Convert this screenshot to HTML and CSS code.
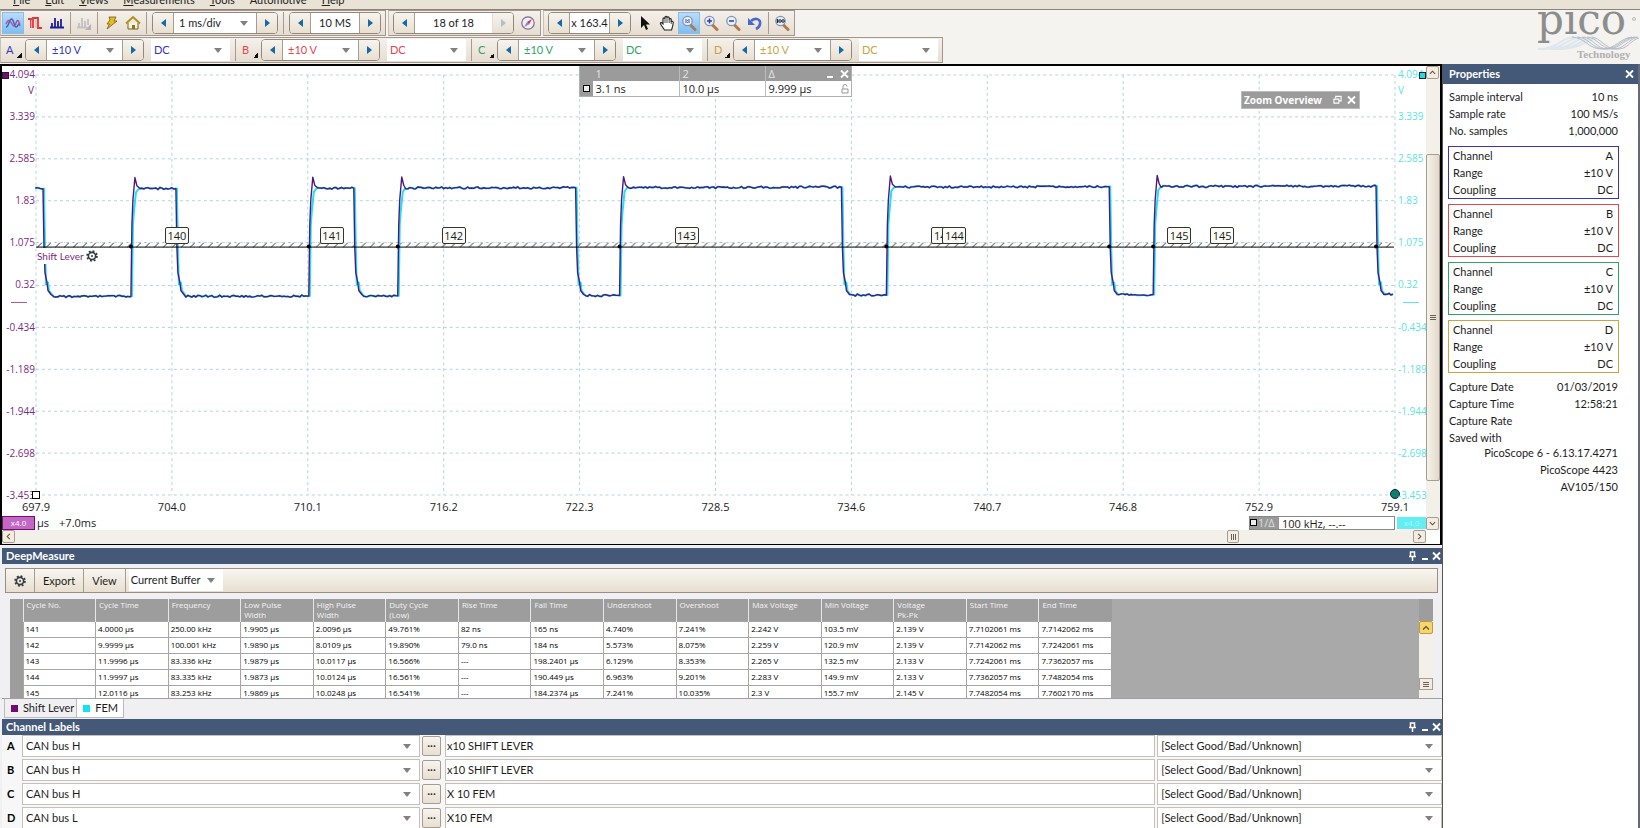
FILE: index.html
```
<!DOCTYPE html>
<html lang="en">
<head>
    <meta charset="UTF-8">
    <title>PicoScope 6 Automotive</title>
    <link rel="stylesheet" href="styles.css">
</head>
<body>

    <!-- shared icons -->
    <svg class="defs" aria-hidden="true">
        <symbol id="gear" viewBox="0 0 12 12">
            <circle cx="6" cy="6" r="3.6" fill="none" stroke="#333a44" stroke-width="1.6"/>
            <circle cx="6" cy="6" r="4.9" fill="none" stroke="#333a44" stroke-width="1.8" stroke-dasharray="1.9 1.95"/>
            <circle cx="6" cy="6" r="1" fill="#333a44"/>
        </symbol>
        <symbol id="lens" viewBox="0 0 16 16">
            <path d="M9 9.500L14 14.500" stroke="#b0794c" stroke-width="3" stroke-linecap="round"/>
            <circle cx="6.500" cy="6" r="4.700" fill="#e9f0fb" stroke="#7f95b8" stroke-width="1.300"/>
        </symbol>
        <symbol id="pin" viewBox="0 0 9 10">
            <path d="M2.500 5V1h4v4M1 5.500h7M4.500 6v4" fill="none" stroke="#fff" stroke-width="1.500"/>
        </symbol>
        <symbol id="min" viewBox="0 0 9 10">
            <path d="M2 8h6" stroke="#fff" stroke-width="2"/>
        </symbol>
        <symbol id="close" viewBox="0 0 9 10">
            <path d="M1 1.500l7 7M8 1.500l-7 7" stroke="#fff" stroke-width="1.800"/>
        </symbol>
    </svg>

    <nav class="menu">
        <a href="#"><u>F</u>ile</a>
        <a href="#"><u>E</u>dit</a>
        <a href="#"><u>V</u>iews</a>
        <a href="#"><u>M</u>easurements</a>
        <a href="#"><u>T</u>ools</a>
        <a href="#">Automotive</a>
        <a href="#"><u>H</u>elp</a>
    </nav>

    <header class="top">
        <div class="bars">
            <div class="row">
                <div class="bar">
                    <button class="icon active" aria-label="Scope mode"><svg viewBox="0 0 16 16"><path d="M1 12C4 12 4 4 6.500 4S9 12 11 12s2-3 4-4" fill="none" stroke="#3c62c4" stroke-width="1.500"/><path d="M1 9C3 4 5 5 6.500 8s3 5 4.500 0 3-2 4 3" fill="none" stroke="#a5568f" stroke-width="1.400"/></svg></button>
                    <button class="icon" aria-label="Persistence mode"><svg viewBox="0 0 16 16"><path d="M1 4h3v9M6 13V3h5v10h4" fill="none" stroke="#e2353b" stroke-width="1.800"/><path d="M4.500 5v8M9 5v8" stroke="#e8a0a0"/></svg></button>
                    <button class="icon" aria-label="Spectrum mode"><svg viewBox="0 0 16 16"><path d="M1 12.500h14M3 12V8M6 12V3M9 12V6M12 12V4" stroke="#1d1d96" stroke-width="1.800" fill="none"/></svg></button>
                    <span class="sep"></span>
                    <button class="icon" aria-label="Trigger view" disabled><svg viewBox="0 0 16 16"><path d="M1 12.500h10M3 12V8M6 12V3M9 12V6M12 10V4" stroke="#c3bfc6" stroke-width="1.800" fill="none"/><path d="M15 9v6H9z" fill="#b5b1b6"/></svg></button>
                    <span class="sep"></span>
                    <button class="icon" aria-label="Auto setup"><svg viewBox="0 0 16 16"><path d="M6 2h7l-2 4h3L4 14l2.500-5H4L7 5z" fill="#e7bb1f" stroke="#77590e" stroke-width=".8"/></svg></button>
                    <button class="icon" aria-label="Home"><svg viewBox="0 0 16 16"><path d="M3 8v6h10V8" fill="#f8f3dc" stroke="#75601c"/><path d="M1 8.500L8 2l7 6.500" fill="none" stroke="#b1901f" stroke-width="2"/><path d="M7 10h3v4H7z" fill="#8b7430"/></svg></button>
                    <span class="sep"></span>
                    <div class="spin">
                        <button class="prev" aria-label="Shorter timebase"></button>
                        <div class="drop time"><select aria-label="Timebase"><option>1 ms/div</option></select></div>
                        <button class="next" aria-label="Longer timebase"></button>
                    </div>
                    <span class="sep"></span>
                    <div class="spin">
                        <button class="prev" aria-label="Fewer samples"></button>
                        <input class="samples" aria-label="Samples" value="10 MS">
                        <button class="next" aria-label="More samples"></button>
                    </div>
                </div>
                <div class="bar">
                    <div class="spin">
                        <button class="prev" aria-label="Previous buffer"></button>
                        <input class="buffer" aria-label="Buffer" value="18 of 18">
                        <button class="next" aria-label="Next buffer" disabled></button>
                    </div>
                    <button class="icon" aria-label="Buffer navigator"><svg viewBox="0 0 16 16"><circle cx="8" cy="8" r="6.200" fill="#f4edf2" stroke="#7a6d92" stroke-width="1.200"/><path d="M12 4L9 9.500 7 7z" fill="#c93a5c"/><path d="M4 12l3-5 2 2.500z" fill="#8f88b8"/></svg></button>
                </div>
                <div class="bar">
                    <div class="spin">
                        <button class="prev" aria-label="Zoom out step"></button>
                        <input class="zoom" aria-label="Zoom factor" value="x 163.4">
                        <button class="next" aria-label="Zoom in step"></button>
                    </div>
                    <button class="icon" aria-label="Select"><svg viewBox="0 0 16 16"><path d="M4 1v12l3-3 2 5 2-1-2-4.500h4z" fill="#111"/></svg></button>
                    <button class="icon" aria-label="Hand"><svg viewBox="0 0 16 16"><path d="M5.500 15L1.500 9c-.5-1.500 1-2 2-.5L4 9V4c0-1.500 2-1.500 2 0V2.500c0-1.500 2-1.500 2 0V3c0-1.500 2.200-1.500 2.200 0v1.500c0-1.200 2-1.200 2 0V7c.2-1 2-1 2 .5 0 3-.7 4.500-1.700 7.500z" fill="#fff" stroke="#222" stroke-width="1.100"/><path d="M6 4v4M8 3v5M10.200 4v4M12.200 6v3" stroke="#222" stroke-width=".8"/></svg></button>
                    <button class="icon active" aria-label="Marquee zoom"><svg viewBox="0 0 16 16"><use href="#lens"/><path d="M5 4v4M8 4v4M6.500 5v.8M6.500 7v.8" stroke="#3c5490" stroke-width="1"/></svg></button>
                    <button class="icon" aria-label="Zoom in"><svg viewBox="0 0 16 16"><use href="#lens"/><path d="M4 6h5M6.500 3.500v5" stroke="#3a35a8" stroke-width="1.500"/></svg></button>
                    <button class="icon" aria-label="Zoom out"><svg viewBox="0 0 16 16"><use href="#lens"/><path d="M4 6h5" stroke="#3a35a8" stroke-width="1.500"/></svg></button>
                    <button class="icon" aria-label="Undo zoom"><svg viewBox="0 0 16 16"><path d="M4 6C8 2 14 4 13 9c-.3 2.500-2 4-4 5" fill="none" stroke="#4a66cf" stroke-width="2.600"/><path d="M1 3v7h7z" fill="#4a66cf"/></svg></button>
                    <span class="sep"></span>
                    <button class="icon" aria-label="Zoom to full view"><svg viewBox="0 0 16 16"><use href="#lens"/><path d="M3.500 4v4" stroke="#222" stroke-width="1.300"/><circle cx="6" cy="6" r="1.300" fill="none" stroke="#222"/><circle cx="9" cy="6" r="1.300" fill="none" stroke="#222"/></svg></button>
                </div>
            </div>
            <div class="row">
                <div class="bar channels">
                    <div class="channel ch-a">
                        <button class="name">A</button>
                        <div class="spin">
                            <button class="prev" aria-label="A range down"></button>
                            <div class="drop range"><select aria-label="A range"><option>±10 V</option></select></div>
                            <button class="next" aria-label="A range up"></button>
                        </div>
                        <div class="drop coupling"><select aria-label="A coupling"><option>DC</option></select></div>
                    </div>
                    <span class="sep"></span>
                    <div class="channel ch-b">
                        <button class="name">B</button>
                        <div class="spin">
                            <button class="prev" aria-label="B range down"></button>
                            <div class="drop range"><select aria-label="B range"><option>±10 V</option></select></div>
                            <button class="next" aria-label="B range up"></button>
                        </div>
                        <div class="drop coupling"><select aria-label="B coupling"><option>DC</option></select></div>
                    </div>
                    <span class="sep"></span>
                    <div class="channel ch-c">
                        <button class="name">C</button>
                        <div class="spin">
                            <button class="prev" aria-label="C range down"></button>
                            <div class="drop range"><select aria-label="C range"><option>±10 V</option></select></div>
                            <button class="next" aria-label="C range up"></button>
                        </div>
                        <div class="drop coupling"><select aria-label="C coupling"><option>DC</option></select></div>
                    </div>
                    <span class="sep"></span>
                    <div class="channel ch-d">
                        <button class="name">D</button>
                        <div class="spin">
                            <button class="prev" aria-label="D range down"></button>
                            <div class="drop range"><select aria-label="D range"><option>±10 V</option></select></div>
                            <button class="next" aria-label="D range up"></button>
                        </div>
                        <div class="drop coupling"><select aria-label="D coupling"><option>DC</option></select></div>
                    </div>
                </div>
            </div>
        </div>
        <svg class="logo" viewBox="0 0 104 54" role="img" aria-label="pico Technology">
            <g fill="none" stroke="#dfe7ee" stroke-width="2">
                <path d="M2 39C22 39 24 28 38 27M8 39C28 39 30 29 44 27M14 39C34 39 36 30 50 27M20 39C40 39 42 31 56 27M26 39C44 38 48 32 60 28"/>
            </g>
            <g fill="none" stroke="#b3bdc8" stroke-width="1">
                <path d="M36 27C50 28 52 39 66 39S84 28 96 27M41 27C54 28 56 39 69 39S86 28 99 27M46 27C58 28 60 39 72 39S89 28 101 27M51 27C62 28 64 38 76 39S92 29 102 27M56 27C66 29 68 38 80 39S94 30 103 28"/>
            </g>
            <text class="logo-name" x="1" y="24">pico</text>
            <circle cx="98" cy="9" r="1.500" fill="none" stroke="#aaa" stroke-width=".8"/>
            <text class="logo-sub" x="41" y="48">Technology</text>
        </svg>
    </header>

    <div class="work">
        <main>
            <section class="scope">
                <div class="canvas">
                    <div class="axis left">
                        <span>4.094<i>V</i></span><span>3.339</span><span>2.585</span><span>1.83</span><span>1.075</span><span>0.32</span><span>-0.434</span><span>-1.189</span><span>-1.944</span><span>-2.698</span><span>-3.453</span>
                    </div>
                    <div class="plot">
                        <svg id="trace" viewBox="0 0 1360 421" preserveAspectRatio="none" aria-label="Waveforms">
                            <defs>
                                <pattern id="hatch" width="9" height="5" y="168" patternUnits="userSpaceOnUse">
                                    <path d="M1 5L6 0" stroke="#333" stroke-width="1"/>
                                </pattern>
                            </defs>
                            <g id="grid"></g>
                            <rect x="1" y="168" width="1358" height="5" fill="url(#hatch)"/>
                            <path id="fem" class="fem"/>
                            <path id="lever" class="lever"/>
                            <path d="M0 172.500h1359" stroke="#000" stroke-width="1"/>
                            <g id="marks"></g>
                        </svg>
                        <div id="cycles"></div>
                        <span class="trace-name">Shift Lever <svg><use href="#gear"/></svg></span>
                        <span class="handle start"></span>
                        <span class="handle end"></span>
                    </div>
                    <div class="axis right">
                        <span>4.094<i>V</i></span><span>3.339</span><span>2.585</span><span>1.83</span><span>1.075</span><span>0.32</span><span>-0.434</span><span>-1.189</span><span>-1.944</span><span>-2.698</span><span>-3.453</span>
                    </div>
                    <div class="times">
                        <span>697.9</span><span>704.0</span><span>710.1</span><span>716.2</span><span>722.3</span><span>728.5</span><span>734.6</span><span>740.7</span><span>746.8</span><span>752.9</span><span>759.1</span>
                    </div>
                    <div class="status">
                        <span class="scale lever-scale">x4.0</span>
                        <span>µs</span>
                        <span class="offset">+7.0ms</span>
                        <div class="frequency"><b><i></i>1/Δ</b>100 kHz, --.--</div>
                        <span class="scale fem-scale">x4.0</span>
                    </div>
                    <span class="knob knob-left"></span>
                    <span class="knob knob-right"></span>
                    <div class="legend">
                        <div class="legend-head"><span></span><span>1</span><span>2</span><span>Δ</span>
                            <div class="tools"><svg><use href="#min"/></svg><svg><use href="#close"/></svg></div>
                        </div>
                        <div class="legend-body"><span class="box"><i></i></span><span>3.1 ns</span><span>10.0 µs</span><span>9.999 µs</span>
                            <svg class="lock" viewBox="0 0 8 10"><path d="M2 5V2.500a2 2 0 0 1 4 0M1 5h6v4H1z" fill="none" stroke="#999"/></svg>
                        </div>
                    </div>
                    <div class="overview">Zoom Overview
                        <svg viewBox="0 0 10 10"><path d="M3 3V1h6v5H7M1 4h5.500v4.500H1z" fill="none" stroke="#fff" stroke-width="1.200"/></svg>
                        <svg viewBox="0 0 9 10"><use href="#close"/></svg>
                    </div>
                </div>
                <div class="vscroll">
                    <button aria-label="Scroll up"><svg viewBox="0 0 8 8"><path d="M1 5.500L4 2.500l3 3"/></svg></button>
                    <div class="vthumb"><i></i></div>
                    <button aria-label="Scroll down"><svg viewBox="0 0 8 8"><path d="M1 2.500l3 3 3-3"/></svg></button>
                </div>
                <div class="hscroll">
                    <button aria-label="Scroll left"><svg viewBox="0 0 8 8"><path d="M5.500 1L2.500 4l3 3"/></svg></button>
                    <div class="hthumb"><i></i></div>
                    <button aria-label="Scroll right"><svg viewBox="0 0 8 8"><path d="M2.500 1l3 3-3 3"/></svg></button>
                </div>
            </section>

            <section class="deep">
                <h2>DeepMeasure <span class="tools"><svg><use href="#pin"/></svg><svg><use href="#min"/></svg><svg><use href="#close"/></svg></span></h2>
                <div class="deep-body">
                    <div class="deep-bar">
                        <button aria-label="Settings"><svg><use href="#gear"/></svg></button>
                        <button>Export</button>
                        <button>View</button>
                        <div class="drop"><select aria-label="Buffer selection"><option>Current Buffer</option></select></div>
                    </div>
                    <div class="sheet">
                        <table>
                            <thead>
                                <tr><th class="stub"></th><th>Cycle No.</th><th>Cycle Time</th><th>Frequency</th><th>Low Pulse<br>Width</th><th>High Pulse<br>Width</th><th>Duty Cycle<br>(Low)</th><th>Rise Time</th><th>Fall Time</th><th>Undershoot</th><th>Overshoot</th><th>Max Voltage</th><th>Min Voltage</th><th>Voltage<br>Pk-Pk</th><th>Start Time</th><th>End Time</th></tr>
                            </thead>
                            <tbody>
                                <tr><th class="stub"></th><td>141</td><td>4.0000 µs</td><td>250.00 kHz</td><td>1.9905 µs</td><td>2.0096 µs</td><td>49.761%</td><td>82 ns</td><td>165 ns</td><td>4.740%</td><td>7.241%</td><td>2.242 V</td><td>103.5 mV</td><td>2.139 V</td><td>7.7102061 ms</td><td>7.7142062 ms</td></tr>
                                <tr><th class="stub"></th><td>142</td><td>9.9999 µs</td><td>100.001 kHz</td><td>1.9890 µs</td><td>8.0109 µs</td><td>19.890%</td><td>79.0 ns</td><td>184 ns</td><td>5.573%</td><td>8.075%</td><td>2.259 V</td><td>120.9 mV</td><td>2.139 V</td><td>7.7142062 ms</td><td>7.7242061 ms</td></tr>
                                <tr><th class="stub"></th><td>143</td><td>11.9996 µs</td><td>83.336 kHz</td><td>1.9879 µs</td><td>10.0117 µs</td><td>16.566%</td><td>---</td><td>198.2401 µs</td><td>6.129%</td><td>8.353%</td><td>2.265 V</td><td>132.5 mV</td><td>2.133 V</td><td>7.7242061 ms</td><td>7.7362057 ms</td></tr>
                                <tr><th class="stub"></th><td>144</td><td>11.9997 µs</td><td>83.335 kHz</td><td>1.9873 µs</td><td>10.0124 µs</td><td>16.561%</td><td>---</td><td>190.449 µs</td><td>6.963%</td><td>9.201%</td><td>2.283 V</td><td>149.9 mV</td><td>2.133 V</td><td>7.7362057 ms</td><td>7.7482054 ms</td></tr>
                                <tr><th class="stub"></th><td>145</td><td>12.0116 µs</td><td>83.253 kHz</td><td>1.9869 µs</td><td>10.0248 µs</td><td>16.541%</td><td>---</td><td>184.2374 µs</td><td>7.241%</td><td>10.035%</td><td>2.3 V</td><td>155.7 mV</td><td>2.145 V</td><td>7.7482054 ms</td><td>7.7602170 ms</td></tr>
                            </tbody>
                        </table>
                        <div class="sheet-scroll">
                            <button aria-label="Scroll up"><svg viewBox="0 0 8 8"><path d="M1 5.500L4 2.500l3 3"/></svg></button>
                            <div class="sheet-thumb"><i></i></div>
                        </div>
                    </div>
                </div>
                <div class="tabs">
                    <button class="tab-lever">Shift Lever</button>
                    <button class="tab-fem">FEM</button>
                </div>
            </section>

            <section class="labels">
                <h2>Channel Labels <span class="tools"><svg><use href="#pin"/></svg><svg><use href="#min"/></svg><svg><use href="#close"/></svg></span></h2>
                <div class="label-row">
                    <label for="sigA">A</label>
                    <div class="drop"><select id="sigA"><option>CAN bus H</option></select></div>
                    <button aria-label="Browse A">···</button>
                    <input aria-label="Note A" value="x10 SHIFT LEVER">
                    <div class="drop"><select aria-label="Result A"><option>[Select Good/Bad/Unknown]</option></select></div>
                </div>
                <div class="label-row">
                    <label for="sigB">B</label>
                    <div class="drop"><select id="sigB"><option>CAN bus H</option></select></div>
                    <button aria-label="Browse B">···</button>
                    <input aria-label="Note B" value="x10 SHIFT LEVER">
                    <div class="drop"><select aria-label="Result B"><option>[Select Good/Bad/Unknown]</option></select></div>
                </div>
                <div class="label-row">
                    <label for="sigC">C</label>
                    <div class="drop"><select id="sigC"><option>CAN bus H</option></select></div>
                    <button aria-label="Browse C">···</button>
                    <input aria-label="Note C" value="X 10 FEM">
                    <div class="drop"><select aria-label="Result C"><option>[Select Good/Bad/Unknown]</option></select></div>
                </div>
                <div class="label-row">
                    <label for="sigD">D</label>
                    <div class="drop"><select id="sigD"><option>CAN bus L</option></select></div>
                    <button aria-label="Browse D">···</button>
                    <input aria-label="Note D" value="X10 FEM">
                    <div class="drop"><select aria-label="Result D"><option>[Select Good/Bad/Unknown]</option></select></div>
                </div>
            </section>
        </main>

        <aside>
            <h2>Properties <span class="tools"><svg><use href="#close"/></svg></span></h2>
            <dl>
                <div><dt>Sample interval</dt><dd>10 ns</dd></div>
                <div><dt>Sample rate</dt><dd>100 MS/s</dd></div>
                <div><dt>No. samples</dt><dd>1,000,000</dd></div>
            </dl>
            <dl class="card ch-a">
                <div><dt>Channel</dt><dd>A</dd></div>
                <div><dt>Range</dt><dd>±10 V</dd></div>
                <div><dt>Coupling</dt><dd>DC</dd></div>
            </dl>
            <dl class="card ch-b">
                <div><dt>Channel</dt><dd>B</dd></div>
                <div><dt>Range</dt><dd>±10 V</dd></div>
                <div><dt>Coupling</dt><dd>DC</dd></div>
            </dl>
            <dl class="card ch-c">
                <div><dt>Channel</dt><dd>C</dd></div>
                <div><dt>Range</dt><dd>±10 V</dd></div>
                <div><dt>Coupling</dt><dd>DC</dd></div>
            </dl>
            <dl class="card ch-d">
                <div><dt>Channel</dt><dd>D</dd></div>
                <div><dt>Range</dt><dd>±10 V</dd></div>
                <div><dt>Coupling</dt><dd>DC</dd></div>
            </dl>
            <dl class="capture">
                <div><dt>Capture Date</dt><dd>01/03/2019</dd></div>
                <div><dt>Capture Time</dt><dd>12:58:21</dd></div>
                <div><dt>Capture Rate</dt><dd></dd></div>
                <div><dt>Saved with</dt><dd></dd></div>
            </dl>
            <p>PicoScope 6 - 6.13.17.4271<br>PicoScope 4423<br>AV105/150</p>
        </aside>
    </div>

    <script src="scope.js"></script>
</body>
</html>
```
FILE: styles.css
```
* {
    box-sizing: border-box;
}

body {
    margin: 0;
    height: 100vh;
    display: flex;
    flex-direction: column;
    overflow: hidden;
    background: #f5f3f0;
    color: #1c1c1c;
    font-family: Lato, "Open Sans", sans-serif;
    font-size: 11px;
    line-height: 16px;
}

button, input, select {
    font: inherit;
    color: inherit;
    margin: 0;
    padding: 0;
    border: 0;
    border-radius: 0;
    background: none;
}

select {
    appearance: none;
}

svg {
    display: block;
}

.defs {
    position: absolute;
    width: 0;
    height: 0;
}

.ch-a { color: #3a32c4; }
.ch-b { color: #e5474f; }
.ch-c { color: #32a368; }
.ch-d { color: #c9a440; }

/* menu and toolbars */
.menu {
    flex: none;
    height: 9px;
    display: flex;
    align-items: flex-end;
    gap: 15px;
    padding: 0 0 1px 13px;
    overflow: hidden;
    background: #e9e3d6;
}

.menu a {
    color: #222;
    text-decoration: none;
}

.top {
    flex: none;
    display: flex;
    justify-content: space-between;
    height: 55px;
    border-top: 1px solid #8e827a;
}

.row {
    display: flex;
    gap: 2px;
    height: 27px;
}

.bar {
    display: flex;
    align-items: center;
    height: 26px;
    padding: 0 1px;
    border: 1px solid #a3968c;
    border-left-color: #c9bfb5;
    background: linear-gradient(#f4f1eb, #e6ddd0);
}

.sep {
    width: 1px;
    height: 22px;
    margin: 0 2px;
    background: #a89a8e;
}

.icon {
    width: 22px;
    height: 22px;
    padding: 3px;
}

.icon svg {
    width: 16px;
    height: 16px;
}

.icon.active {
    background: linear-gradient(#b9dcfa, #7fbdf2);
    border: 1px solid #8cbce8;
    padding: 2px;
}

.spin {
    display: flex;
    height: 22px;
    margin: 0 3px;
    border: 1px solid #94877c;
    border-radius: 4px;
    overflow: hidden;
    background: #fff;
}

.spin button {
    width: 21px;
    display: flex;
    align-items: center;
    justify-content: center;
    background: linear-gradient(#f7f4ee, #e8dfd0);
}

.prev { border-right: 1px solid #a89c90; }
.next { border-left: 1px solid #a89c90; }

.prev::before, .next::before {
    content: "";
    border: 4px solid transparent;
}

.prev::before { border-right: 5px solid #1469a8; border-left: 0; }
.next::before { border-left: 5px solid #1469a8; border-right: 0; }
.next:disabled { border-left-color: #e4ddd4; }
.next:disabled::before { border-left-color: #a9c2d4; }

.spin input {
    text-align: center;
}

.time { width: 82px; }
.samples { width: 48px; }
.buffer { width: 77px; }
.zoom { width: 39px; }
.range { width: 75px; }

.drop {
    position: relative;
    background: #fff;
}

.drop select {
    width: 100%;
    height: 100%;
    padding-left: 5px;
}

.drop::after {
    content: "";
    position: absolute;
    top: 50%;
    right: 8px;
    margin-top: -2px;
    border: 4px solid transparent;
    border-top: 5px solid #85807f;
    border-bottom: 0;
    pointer-events: none;
}

.channel {
    display: flex;
    align-items: center;
}

.name {
    width: 20px;
    height: 16px;
    padding-left: 4px;
    text-align: left;
    background: linear-gradient(135deg, transparent 50%, #111 50%) right bottom / 5px 5px no-repeat;
}

.coupling {
    width: 79px;
    height: 22px;
    margin: 0 3px 0 4px;
}

.coupling select {
    padding-left: 3px;
}

.logo {
    width: 104px;
    height: 54px;
}

.logo-name {
    font: 42px "DejaVu Serif", serif;
    fill: #8d8d8d;
}

.logo-sub {
    font: bold 11px "Liberation Serif", serif;
    fill: #b0b0b0;
}

/* main area */
.work {
    flex: 1;
    min-height: 0;
    display: flex;
}

main {
    flex: 1;
    min-width: 0;
    display: flex;
    flex-direction: column;
    border-right: 1px solid #555;
    background: #f0f0f2;
}

h2 {
    display: flex;
    justify-content: space-between;
    align-items: center;
    margin: 0;
    padding: 0 1px 0 4px;
    height: 16px;
    font-size: 11px;
    font-weight: bold;
    color: #fff;
    background: #445878;
}

.tools {
    display: flex;
    gap: 3px;
}

.tools svg {
    width: 9px;
    height: 10px;
}

/* scope view */
.scope {
    flex: 1;
    min-height: 0;
    display: grid;
    grid-template-columns: 1fr 14px;
    grid-template-rows: 1fr 14px;
    border: 2px solid #000;
    border-bottom-width: 1px;
    background: #fff;
    font-family: "Open Sans", sans-serif;
}

.canvas {
    position: relative;
    display: grid;
    grid-template-columns: 34px 1fr 31px;
    grid-template-rows: 1fr 20px 15px;
    padding-top: 9px;
}

.axis {
    display: flex;
    flex-direction: column;
    justify-content: space-between;
    margin: -9px 0 -8px;
    font-size: 10px;
}

.axis span {
    position: relative;
}

.axis i {
    position: absolute;
    top: 16px;
    font-style: normal;
}

.left {
    text-align: right;
    color: #7b2b82;
    padding-right: 1px;
}

.left i {
    right: 1px;
}

.right {
    padding-left: 3px;
    color: #5ce4e4;
    white-space: nowrap;
}

.right i {
    left: 0;
}

.plot {
    position: relative;
}

#trace {
    position: absolute;
    width: 100%;
    height: 100%;
    overflow: visible;
}

.grid-line {
    stroke: #b4d6d8;
    stroke-dasharray: 3 3;
}

.fem, .lever {
    fill: none;
    stroke-linejoin: round;
}

.fem {
    stroke: #1fe0f5;
    stroke-width: 2;
}

.lever {
    stroke: #4b1a80;
    stroke-width: 1.4;
}

.cycle {
    position: absolute;
    top: 36%;
    width: 24px;
    margin: 1px 0 0 -12px;
    height: 17px;
    border: 1px solid #333;
    border-radius: 2px;
    background: #fbfbf6;
    line-height: 15px;
    text-align: center;
}

.trace-name {
    position: absolute;
    left: 1px;
    top: 41%;
    display: flex;
    align-items: center;
    gap: 2px;
    margin-top: 1px;
    background: #fff;
    color: #7b2b82;
    font-size: 10px;
    font-family: Lato, sans-serif;
}

.trace-name svg {
    width: 12px;
    height: 12px;
}

.handle {
    position: absolute;
    bottom: -4px;
}

.start {
    left: -4px;
    width: 8px;
    height: 8px;
    border: 1px solid #000;
    background: #fff;
}

.end {
    right: -5px;
    width: 10px;
    height: 10px;
    border: 1px solid #123;
    border-radius: 50%;
    background: #0f8070;
}

.knob {
    position: absolute;
    top: 6px;
    width: 7px;
    height: 7px;
    border: 1px solid #222;
}

.knob-left { left: 0; background: #7a0a7a; }
.knob-right { right: 0; background: #19dfe8; }

.times {
    grid-column: 2;
    display: flex;
    justify-content: space-between;
    margin: 4px -20px 0;
}

.times span {
    width: 40px;
    text-align: center;
}

.status {
    grid-column: 1 / -1;
    display: flex;
    align-items: center;
    gap: 2px;
}

.scale {
    height: 14px;
    font-size: 8px;
    line-height: 12px;
    text-align: center;
    color: #fff;
}

.lever-scale {
    width: 33px;
    border: 1px solid #7a0a7a;
    background: #c267c4;
}

.fem-scale {
    width: 29px;
    height: 12px;
    background: #62eef2;
    color: #a8f7f7;
}

.offset {
    margin-left: 8px;
}

.frequency {
    display: flex;
    gap: 3px;
    width: 146px;
    height: 14px;
    margin-left: auto;
    border: 1px solid #888;
    line-height: 13px;
}

.frequency b {
    display: flex;
    align-items: center;
    gap: 1px;
    width: 29px;
    background: #999;
    color: #ddd;
    font-weight: normal;
}

.frequency i, .box i {
    width: 7px;
    height: 7px;
    border: 1px solid #000;
    background: #eee;
}

.legend {
    position: absolute;
    top: 0;
    left: 2px;
    right: 0;
    width: 273px;
    margin: auto;
    border: 1px solid #b0b0b0;
    border-top: 0;
    background: #fff;
}

.legend-head, .legend-body {
    display: grid;
    grid-template-columns: 13px 86px 86px 1fr auto;
    align-items: center;
    height: 15px;
    padding-right: 2px;
    line-height: 15px;
}

.legend-head {
    background: #9b9b9b;
    color: #e4e4e4;
}

.legend-head span, .legend-body span {
    padding-left: 3px;
    height: 100%;
}

.legend-head span + span + span, .legend-body span + span + span {
    border-left: 1px solid #bbb;
}

.legend .box {
    display: flex;
    align-items: center;
    background: #9b9b9b;
}

.lock {
    width: 8px;
    height: 10px;
}

.legend-head .tools {
    gap: 6px;
}

.overview {
    position: absolute;
    top: 25px;
    right: 66px;
    display: flex;
    align-items: center;
    gap: 5px;
    width: 119px;
    height: 18px;
    padding: 0 3px 0 2px;
    border: 1px solid #bbb;
    background: #9b9b9b;
    color: #fff;
    font-size: 10px;
    font-weight: bold;
    white-space: nowrap;
}

.overview svg {
    width: 9px;
    height: 10px;
}

.overview svg:first-of-type {
    margin-left: auto;
}

/* scrollbars */
.vscroll, .hscroll, .sheet-scroll {
    display: flex;
    background: #f3efe9;
}

.vscroll {
    flex-direction: column;
}

.hscroll {
    grid-column: 1;
}

.vscroll button, .hscroll button, .sheet-scroll button {
    width: 13px;
    height: 13px;
    flex: none;
    padding: 2px;
    border: 1px solid #a89c90;
    border-radius: 2px;
    background: #f3ece0;
}

.vscroll path, .hscroll path, .sheet-scroll path {
    fill: none;
    stroke: #5d4d44;
    stroke-width: 1.2;
}

.vthumb {
    flex: 326;
    margin-top: 75px;
    margin-bottom: 36px;
    border: 1px solid #a89c90;
    border-radius: 2px;
    background: linear-gradient(90deg, #f6f2ea, #e2d9ca);
}

.vthumb, .hthumb, .sheet-thumb {
    display: flex;
    align-items: center;
    justify-content: center;
}

.vthumb i, .sheet-thumb i {
    width: 6px;
    height: 5px;
    background: repeating-linear-gradient(#6d5f55 0 1px, transparent 1px 2px);
}

.hthumb i {
    width: 5px;
    height: 6px;
    background: repeating-linear-gradient(90deg, #6d5f55 0 1px, transparent 1px 2px);
}

.hthumb {
    width: 12px;
    height: 13px;
    margin-left: auto;
    margin-right: 174px;
    border: 1px solid #a89c90;
    border-radius: 2px;
    background: #f3ece0;
}

/* DeepMeasure */
.deep {
    flex: none;
    margin-top: 3px;
    border-left: 2px solid #f0f0f2;
}

.deep-body {
    display: flex;
    flex-direction: column;
    gap: 6px;
    padding: 4px 4px 0 3px;
    border-bottom: 1px solid #a0a0a0;
}

.deep-bar {
    display: flex;
    height: 25px;
    border: 1px solid #9a8f86;
    background: linear-gradient(#f8f6f1, #e8dfcf);
}

.deep-bar button {
    padding: 0 8px;
    border-right: 1px solid #a89c90;
}

.deep-bar svg {
    width: 12px;
    height: 12px;
}

.deep-bar .drop {
    width: 94px;
    height: 22px;
    margin-left: 3px;
}

.deep-bar select {
    padding-left: 2px;
}

.sheet {
    display: flex;
    justify-content: space-between;
    height: 99px;
    margin: 0 5px;
    overflow: hidden;
    background: #a9a9a9;
}

table {
    table-layout: fixed;
    width: 1102px;
    height: 103px;
    border-collapse: collapse;
    font-family: "Open Sans", sans-serif;
    font-size: 8px;
    line-height: 10px;
}

th {
    height: 22px;
    padding: 1px 0 0 3px;
    border-left: 1px solid #e6e6e6;
    background: #9d9d9d;
    color: #f4f4f4;
    font-weight: normal;
    text-align: left;
    vertical-align: top;
}

td {
    height: 16px;
    padding: 0 0 0 2px;
    border: 1px solid #a6a6a6;
    background: #fff;
    color: #000;
    white-space: nowrap;
}

.stub {
    width: 13px;
    height: auto;
    padding: 0;
    border: 0;
}

.sheet-scroll {
    flex-direction: column;
    width: 14px;
    border-top: 22px solid #9d9d9d;
}

.sheet-scroll button {
    width: 14px;
    border-color: #c09a3c;
    background: #f8d568;
}

.sheet-thumb {
    height: 12px;
    margin-top: 44px;
    border: 1px solid #a89c90;
    background: #f3ece0;
}

.tabs {
    display: flex;
    height: 20px;
    padding-left: 2px;
}

.tabs button {
    display: flex;
    align-items: center;
    gap: 5px;
    height: 19px;
    padding: 0 5px 0 6px;
    border: 1px solid #bbb;
    border-top: 0;
}

.tabs button::before {
    content: "";
    width: 7px;
    height: 7px;
}

.tab-lever::before { background: #730a73; }
.tab-fem::before { background: #10e4f0; }
.tabs .tab-lever { padding-right: 2px; }
.tabs .tab-fem { background: #fff; border-left: 0; }

/* channel labels */
.labels {
    flex: none;
    height: 109px;
    overflow: hidden;
    border-left: 2px solid #f0f0f2;
}

.label-row {
    display: grid;
    grid-template-columns: 18px 398px 19px 5fr 2fr;
    gap: 0 2px;
    height: 24px;
    padding: 0 0 2px;
    background: #f7f7f7;
}

.label-row label {
    padding-left: 5px;
    line-height: 22px;
    font-weight: bold;
    color: #000;
}

.label-row .drop, .label-row input {
    min-width: 0;
    border: 1px solid #c4c0bc;
    background: #fff;
}

.label-row input {
    margin-left: 2px;
    padding-left: 1px;
}

.label-row select {
    padding-left: 3px;
}

.label-row button {
    height: 20px;
    margin-top: 1px;
    border: 1px solid #a89c90;
    border-radius: 2px;
    background: linear-gradient(#f7f4ee, #e8dfd0);
    line-height: 16px;
}

/* properties */
aside {
    flex: none;
    width: 197px;
    border-right: 2px solid #666a74;
    background: #fff;
}

aside h2 {
    height: 20px;
    margin-bottom: 4px;
    padding: 0 4px 0 6px;
}

aside dl {
    margin: 0 19px 7px 5px;
    padding: 0 1px;
    line-height: 17px;
}

aside dl div {
    display: flex;
    justify-content: space-between;
}

aside dd {
    margin: 0;
}

.card {
    margin-bottom: 5px;
    padding: 0 5px 0 4px;
    border: 1px solid;
}

.card dt, .card dd {
    color: #1c1c1c;
}

.capture {
    margin-bottom: 0;
}

aside p {
    margin: -2px 20px 0 0;
    line-height: 17px;
    text-align: right;
}
```
FILE: scope.js
```
var NS = 'http://www.w3.org/2000/svg';
var W = 1360, H = 421;

// alternating fall / rise positions, starting high
var edges = [7, 95, 140, 273, 318, 362, 540, 584, 806, 851, 1074, 1118, 1341];
var cycles = [[141, 140], [296, 141], [418, 142], [651, 143], [908, 144], [919, 144], [1144, 145], [1187, 145]];

// noise depends on x only, so both traces follow each other on the flat parts
function noise(x) {
    var n = Math.sin(x * 12.9898) * 43758.5453;
    return (n - Math.floor(n) - 0.5) * 2;
}

// signal drifts up slightly from left to right
function high(x) { return 114 - x / 500; }
function low(x) { return 222 - x / 600; }

function buildPath(shift, peak, lag) {
    var d = 'M0 ' + high(0);
    var x = 0;
    var isHigh = true;
    edges.concat([W]).forEach(function(edge) {
        for (; x < edge; x += 2) {
            d += 'L' + x + ' ' + ((isHigh ? high(x) : low(x)) + noise(x)).toFixed(1);
        }
        if (edge === W) return;
        var e = edge + shift;
        if (isHigh) {
            d += 'L' + e + ' ' + high(e) + 'L' + (e + 1) + ' 173L' + (e + 2) + ' ' + (198 + lag) +
                'L' + (e + 4) + ' 208L' + (e + 5) + ' 216L' + (e + 8) + ' 220';
            x = edge + 10 + edge % 2;
        } else {
            d += 'L' + e + ' ' + low(e) + 'L' + (e + 1) + ' 150L' + (e + 2) + ' ' + (125 + lag) +
                'L' + (e + 4) + ' ' + (high(e) - peak) + 'L' + (e + 6) + ' ' + (high(e) - peak / 4);
            x = edge + 8 + edge % 2;
        }
        isHigh = !isHigh;
    });
    return d;
}

function line(x1, y1, x2, y2) {
    var el = document.createElementNS(NS, 'line');
    el.setAttribute('x1', x1);
    el.setAttribute('y1', y1);
    el.setAttribute('x2', x2);
    el.setAttribute('y2', y2);
    return el;
}

var grid = document.getElementById('grid');
for (var i = 0; i <= 10; i++) {
    var v = line(i * W / 10, 0, i * W / 10, H);
    var h = line(0, Math.round(i * H / 10), W, Math.round(i * H / 10));
    v.setAttribute('class', 'grid-line');
    h.setAttribute('class', 'grid-line');
    grid.appendChild(v);
    grid.appendChild(h);
}
// zero level markers
var zeroLeft = line(-25, 228, -9, 228);
zeroLeft.setAttribute('stroke', '#9a5a9f');
grid.appendChild(zeroLeft);
var zeroRight = line(1368, 228, 1384, 228);
zeroRight.setAttribute('stroke', '#5ce4e4');
grid.appendChild(zeroRight);

document.getElementById('fem').setAttribute('d', buildPath(1, -4, 12));
document.getElementById('lever').setAttribute('d', buildPath(0, 11, 0));

var marks = document.getElementById('marks');
[95, 273, 362, 584, 851, 1074, 1118, 1341].forEach(function(x) {
    var dot = document.createElementNS(NS, 'circle');
    dot.setAttribute('cx', x);
    dot.setAttribute('cy', 172);
    dot.setAttribute('r', 2);
    marks.appendChild(dot);
});

cycles.forEach(function(c) {
    var tag = document.createElement('span');
    tag.className = 'cycle';
    tag.style.left = (c[0] / W * 100) + '%';
    tag.textContent = c[1];
    document.getElementById('cycles').appendChild(tag);
});
```
